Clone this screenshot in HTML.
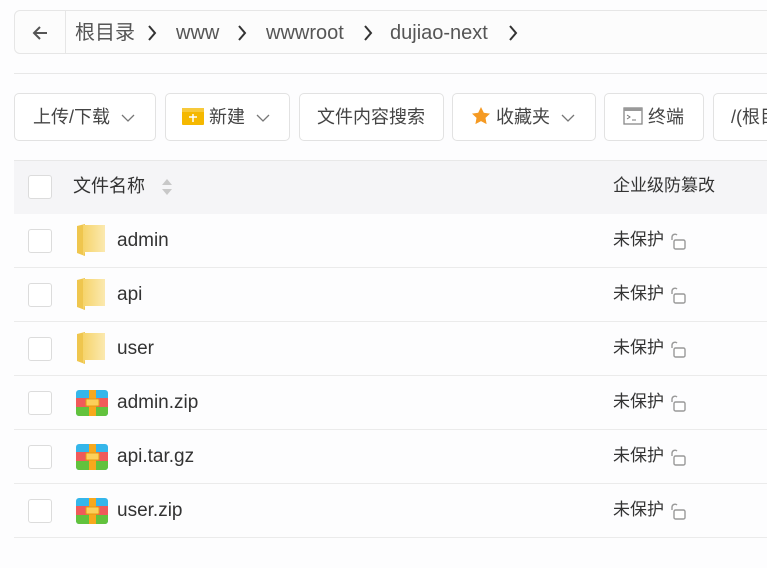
<!DOCTYPE html>
<html><head><meta charset="utf-8"><style>
*{box-sizing:border-box;margin:0;padding:0}
body{width:767px;height:568px;overflow:hidden;background:#fdfdfe;font-family:"Liberation Sans","Noto Sans CJK SC",sans-serif;color:#333;position:relative}
span{line-height:24px;white-space:nowrap}
.crumb{position:absolute;left:14px;top:10px;width:780px;height:44px;border:1px solid #e6e6e6;border-radius:6px;background:#fcfcfc}
.back{position:absolute;left:0;top:0;width:51px;height:42px;border-right:1px solid #e6e6e6}
.ct{position:absolute;top:21px;font-size:20px;color:#555}
.sep{position:absolute;left:14px;top:73px;width:760px;border-top:1px solid #e8e8e8}
.btn{position:absolute;top:93px;height:48px;border:1px solid #e2e2e2;border-radius:5px;background:#fff;font-size:18px;color:#444;line-height:46px;white-space:nowrap;overflow:hidden}
.hdr{position:absolute;left:14px;top:160px;width:760px;height:54px;background:#f5f5f7;border-top:1px solid #e8e8e8}
.cb{position:absolute;left:28px;width:24px;height:24px;border:1px solid #dcdcdc;border-radius:3px;background:#fff}
.row{position:absolute;left:14px;width:760px;height:54px;border-bottom:1px solid #ebebeb}
.nm{position:absolute;left:117px;font-size:19px;color:#333}
.pr{position:absolute;left:613px;font-size:17px;color:#333}
</style></head><body>
<div class="crumb"><div class="back"><svg width="51" height="42"><path d="M32 22H19M25 16l-6 6 6 6" fill="none" stroke="#555" stroke-width="2"/></svg></div></div>
<span class="ct" style="left:75px">根目录</span>
<span class="ct" style="left:176px">www</span>
<span class="ct" style="left:266px">wwwroot</span>
<span class="ct" style="left:390px">dujiao-next</span>
<svg style="position:absolute;left:0;top:0" width="767" height="60"><g fill="none" stroke="#333" stroke-width="2"><path d="M149 26l6 7-6 7"/><path d="M239 26l6 7-6 7"/><path d="M365 26l6 7-6 7"/><path d="M510 26l6 7-6 7"/></g></svg>
<div class="sep"></div>
<div class="btn" style="left:14px;width:142px;padding-left:18px">上传/下载 <svg width="14" height="10" style="margin-left:6px"><path d="M1 2l6 6 6-6" fill="none" stroke="#777" stroke-width="1.3"/></svg></div>
<div class="btn" style="left:165px;width:125px;padding-left:16px"><svg width="22" height="18" style="vertical-align:-2px"><rect x="0" y="1" width="22" height="17" rx="1" fill="#f5b800"/><rect x="0" y="1" width="22" height="4" fill="#f7c93a"/><path d="M11 7v8M7 10h8" stroke="#fff" stroke-width="1.5"/></svg> 新建 <svg width="14" height="10" style="margin-left:6px"><path d="M1 2l6 6 6-6" fill="none" stroke="#777" stroke-width="1.3"/></svg></div>
<div class="btn" style="left:299px;width:145px;padding-left:17px">文件内容搜索</div>
<div class="btn" style="left:452px;width:144px;padding-left:18px"><svg width="20" height="19" style="vertical-align:-2px"><path d="M10 1l2.8 5.8 6.2.8-4.5 4.3 1.1 6.2L10 15.1 4.4 18.1l1.1-6.2L1 7.6l6.2-.8z" fill="#f59a23"/></svg> 收藏夹 <svg width="14" height="10" style="margin-left:6px"><path d="M1 2l6 6 6-6" fill="none" stroke="#777" stroke-width="1.3"/></svg></div>
<div class="btn" style="left:604px;width:100px;padding-left:18px"><svg width="20" height="18" style="vertical-align:-2px"><rect x="1" y="1" width="18" height="16" fill="#fff" stroke="#888" stroke-width="1.3"/><rect x="1" y="1" width="18" height="3" fill="#999"/><path d="M4 8l3 2-3 2M9 13h4" fill="none" stroke="#777" stroke-width="1"/></svg> 终端</div>
<div class="btn" style="left:713px;width:80px;padding-left:17px">/(根目录)</div>
<div class="hdr"></div>
<div class="cb" style="top:175px"></div>
<span style="position:absolute;left:73px;top:174px;font-size:18px;color:#333">文件名称</span>
<svg style="position:absolute;left:160px;top:178px" width="14" height="18"><path d="M7 1l5 6H2zM7 17l5-6H2z" fill="#c8c8c8"/></svg>
<span style="position:absolute;left:613px;top:174px;font-size:17px;color:#333">企业级防篡改</span>

<div class="row" style="top:214px"></div>
<div class="row" style="top:268px"></div>
<div class="row" style="top:322px"></div>
<div class="row" style="top:376px"></div>
<div class="row" style="top:430px"></div>
<div class="row" style="top:484px"></div>

<div class="cb" style="top:229px"></div><div class="cb" style="top:283px"></div><div class="cb" style="top:337px"></div><div class="cb" style="top:391px"></div><div class="cb" style="top:445px"></div><div class="cb" style="top:499px"></div>

<svg style="position:absolute;left:0;top:0" width="767" height="568">
<defs>
<linearGradient id="f" x1="0" x2="1"><stop offset="0" stop-color="#f6d46a"/><stop offset="1" stop-color="#fbe9b0"/></linearGradient>
<g id="fold"><path d="M0 2l8-2v32l-8-3z" fill="#efc64e"/><path d="M6 1h22v27H8l-2 4z" fill="url(#f)"/></g>
<g id="zip"><rect x="0" y="0" width="32" height="26" rx="3" fill="#35b6ea"/><rect x="0" y="8" width="32" height="9" fill="#f05a5a"/><path d="M0 17h32v6a3 3 0 0 1-3 3H3a3 3 0 0 1-3-3z" fill="#62c23d"/><rect x="13" y="0" width="7" height="26" fill="#f7a81c"/><rect x="10" y="9" width="13" height="7" rx="1" fill="#fcd05a" stroke="#e69a14"/></g>
<g id="lk"><path d="M2 7V4a3 3 0 0 1 5-2" fill="none" stroke="#999" stroke-width="1.4"/><rect x="4" y="7" width="11" height="9" rx="1.5" fill="#fff" stroke="#999" stroke-width="1.4"/></g>
</defs>
<use href="#fold" x="77" y="224"/><use href="#fold" x="77" y="278"/><use href="#fold" x="77" y="332"/>
<use href="#zip" x="76" y="390"/><use href="#zip" x="76" y="444"/><use href="#zip" x="76" y="498"/>
<use href="#lk" x="670" y="233"/><use href="#lk" x="670" y="287"/><use href="#lk" x="670" y="341"/><use href="#lk" x="670" y="395"/><use href="#lk" x="670" y="449"/><use href="#lk" x="670" y="503"/>
</svg>

<span class="nm" style="top:229px">admin</span>
<span class="nm" style="top:283px">api</span>
<span class="nm" style="top:337px">user</span>
<span class="nm" style="top:391px">admin.zip</span>
<span class="nm" style="top:445px">api.tar.gz</span>
<span class="nm" style="top:499px">user.zip</span>
<span class="pr" style="top:228px">未保护</span><span class="pr" style="top:282px">未保护</span><span class="pr" style="top:336px">未保护</span><span class="pr" style="top:390px">未保护</span><span class="pr" style="top:444px">未保护</span><span class="pr" style="top:498px">未保护</span>
</body></html>
